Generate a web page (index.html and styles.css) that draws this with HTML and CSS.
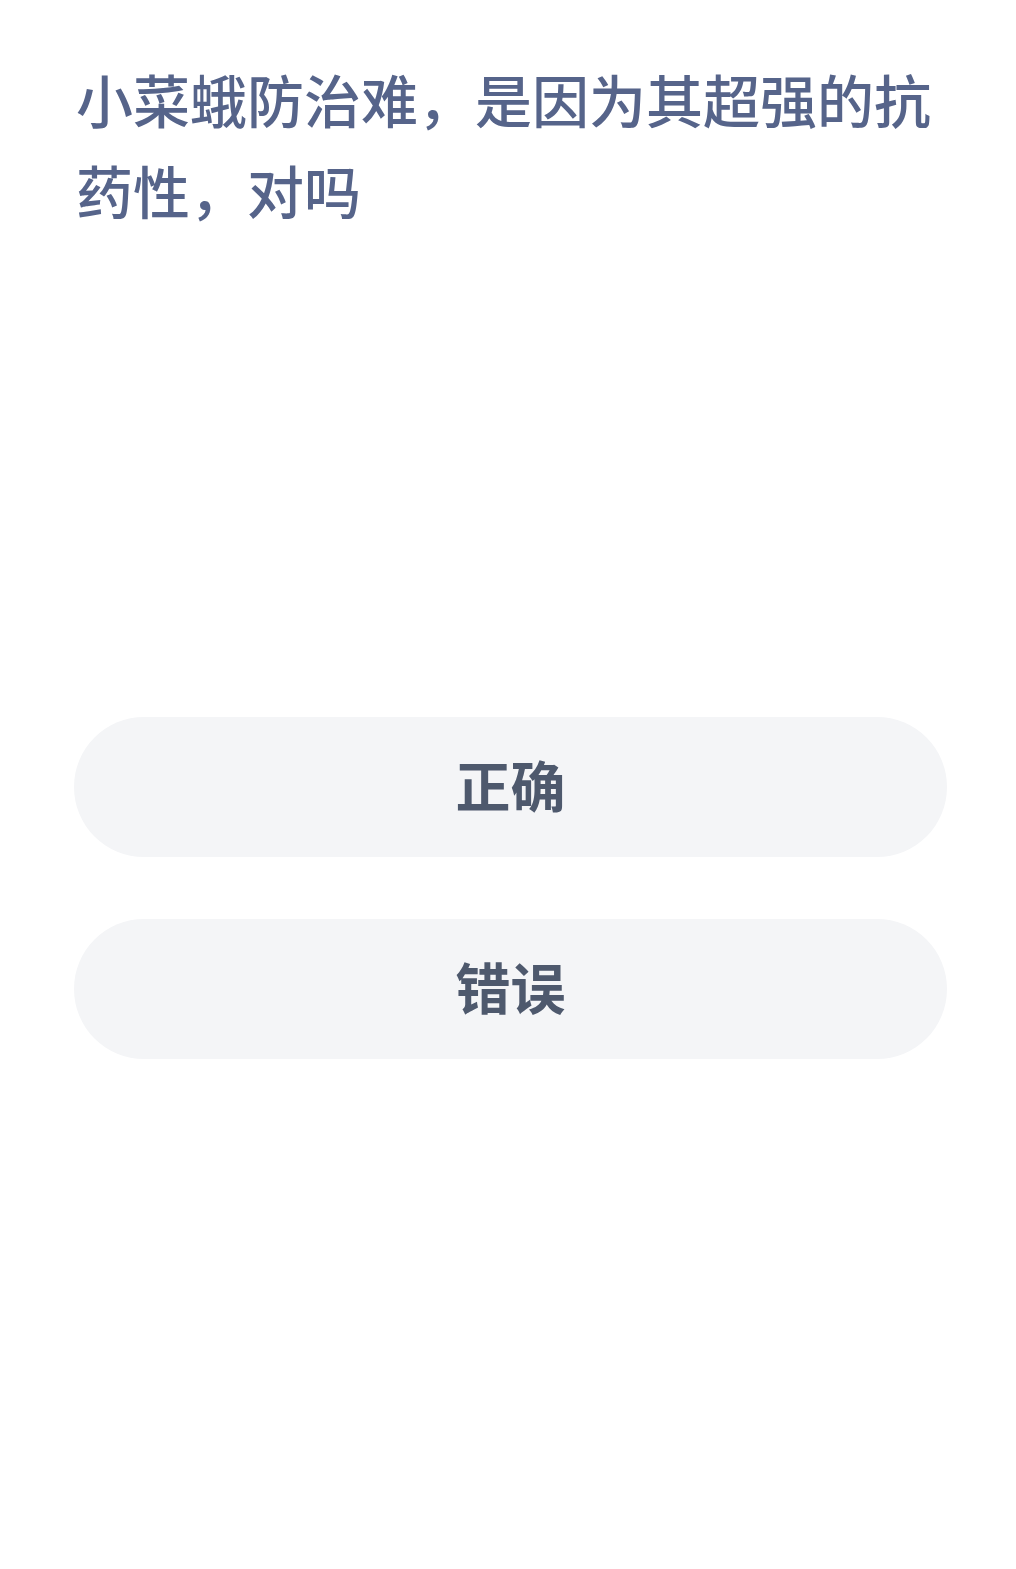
FILE: index.html
```html
<!DOCTYPE html>
<html lang="zh-CN">
<head>
<meta charset="utf-8">
<link rel="stylesheet" href="styles.css">
</head>
<body>
<main class="page">
  <h1 class="question">小菜蛾防治难，是因为其超强的抗药性，对吗</h1>
  <div class="options">
    <button class="option">正确</button>
    <button class="option">错误</button>
  </div>
</main>
</body>
</html>
```
FILE: styles.css
```css
html, body {
  margin: 0;
  padding: 0;
  background: #ffffff;
}
.page {
  width: 1016px;
  min-height: 1569px;
  box-sizing: border-box;
  padding: 53px 69px 0 76px;
  font-family: "Noto Sans CJK SC", "Noto Sans", sans-serif;
}
.question {
  margin: 0;
  font-size: 57px;
  line-height: 91px;
  font-weight: 500;
  color: #56648a;
  letter-spacing: 0;
}
.options {
  margin-top: 482px;
  margin-left: -2px;
  display: flex;
  flex-direction: column;
  gap: 62px;
}
.option {
  width: 873px;
  height: 140px;
  border: none;
  border-radius: 70px;
  background: #f4f5f7;
  font-family: "Noto Sans CJK SC", "Noto Sans", sans-serif;
  font-size: 55px;
  font-weight: 700;
  color: #4e596d;
  padding: 0 0 8px 0;
}
```
